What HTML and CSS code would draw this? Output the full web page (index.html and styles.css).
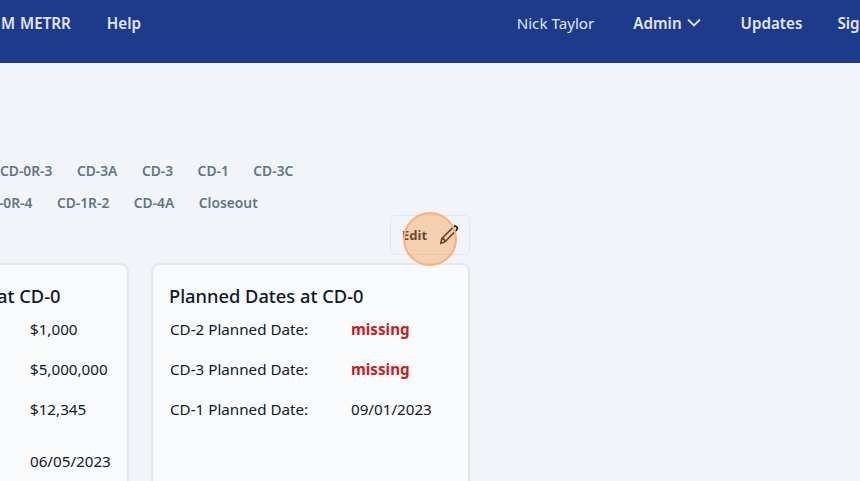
FILE: index.html
```html
<!DOCTYPE html>
<html lang="en">
<head>
    <meta charset="UTF-8">
    <meta name="viewport" content="width=device-width, initial-scale=1.0">
    <title>PM METRR</title>
    <link rel="stylesheet" href="styles.css">
</head>
<body>
    <header class="topbar">
        <nav class="nav-left">
            <a class="nav-link nav-brand" href="#">M METRR</a>
            <a class="nav-link" href="#">Help</a>
        </nav>
        <nav class="nav-right">
            <span class="nav-user">Nick Taylor</span>
            <a class="nav-link nav-admin" href="#">Admin
                <svg class="chevron" viewBox="0 0 14 9" width="14" height="9"><path d="M1 1.5l6 6 6-6" fill="none" stroke="currentColor" stroke-width="1.8"/></svg>
            </a>
            <a class="nav-link nav-updates" href="#">Updates</a>
            <a class="nav-link nav-sign" href="#">Sign Out</a>
        </nav>
    </header>

    <main class="content">
        <div class="tabs">
            <div class="tab-row tab-row-one">
                <a href="#">CD-0R-3</a>
                <a href="#">CD-3A</a>
                <a href="#">CD-3</a>
                <a href="#">CD-1</a>
                <a href="#">CD-3C</a>
            </div>
            <div class="tab-row tab-row-two">
                <a href="#">CD-0R-4</a>
                <a href="#">CD-1R-2</a>
                <a href="#">CD-4A</a>
                <a href="#">Closeout</a>
            </div>
        </div>

        <div class="edit-row">
            <button class="edit-btn" type="button">Edit
                <svg class="pencil" viewBox="0 0 20 20" width="20" height="20"><path d="M1.6 18.4l1.3-5L14.6 1.9c.9-.8 2.2-.8 3 0 .8.8.8 2.1 0 3L6 16.8z M2.9 13.4c1.8.3 3 1.5 3.1 3.4" fill="none" stroke="currentColor" stroke-width="1.6" stroke-linejoin="round"/></svg>
            </button>
            <span class="click-marker"></span>
        </div>

        <div class="cards">
            <section class="card card-wide-label">
                <h2>Planned Financials at CD-0</h2>
                <div class="card-row"><span>TEC Low:</span><span>$1,000</span></div>
                <div class="card-row"><span>TEC High:</span><span>$5,000,000</span></div>
                <div class="card-row"><span>OPC:</span><span>$12,345</span></div>
                <div class="card-row card-row-tall"><span>CD-0 Approval Date:</span><span>06/05/2023</span></div>
            </section>
            <section class="card">
                <h2>Planned Dates at CD-0</h2>
                <div class="card-row"><span>CD-2 Planned Date:</span><span class="missing">missing</span></div>
                <div class="card-row"><span>CD-3 Planned Date:</span><span class="missing">missing</span></div>
                <div class="card-row"><span>CD-1 Planned Date:</span><span>09/01/2023</span></div>
            </section>
        </div>
    </main>
</body>
</html>
```

FILE: styles.css
```css
* {
    box-sizing: border-box;
}
html, body {
    height: 100%;
}
body {
    margin: 0;
    overflow: hidden;
    background-color: #f1f5f9;
    color: #111827;
    font-family: "Noto Sans", "Open Sans", Arial, sans-serif;
    font-size: 15.2px;
}
a {
    color: inherit;
    text-decoration: none;
}

/* barra superior */
.topbar {
    display: flex;
    justify-content: space-between;
    align-items: center;
    height: 63px;
    padding-bottom: 18px;
    background-color: #1e3a8a;
    color: #e0e7ff;
    white-space: nowrap;
}
.nav-left, .nav-right {
    display: flex;
    align-items: center;
}
.nav-left {
    gap: 36px;
    margin-left: 1px;
}
.nav-right {
    gap: 39px;
    margin-right: -41px;
}
.nav-link {
    font-weight: 600;
}
.nav-brand {
    word-spacing: 1px;
}
.nav-updates {
    margin-left: 1px;
}
.nav-sign {
    margin-left: -4px;
}
.nav-user {
    color: #dbeafe;
}
.nav-admin {
    display: flex;
    align-items: center;
    gap: 5px;
}

/* pestañas */
.content {
    padding-top: 91px;
}
.tab-row {
    display: flex;
    gap: 24.5px;
    height: 32px;
    align-items: center;
    color: #64748b;
    font-size: 13.8px;
    font-weight: 600;
    white-space: nowrap;
}
.tab-row-two {
    margin-left: -20px;
}

/* boton de editar */
.edit-row {
    position: relative;
    width: 470px;
    display: flex;
    justify-content: flex-end;
    margin-top: -3px;
}
.edit-btn {
    display: flex;
    align-items: center;
    justify-content: space-between;
    width: 80px;
    height: 40px;
    padding: 0 10px 0 11px;
    background: transparent;
    border: 1px solid #e2e8f0;
    border-radius: 5px;
    color: #111827;
    font-family: inherit;
    font-size: 13px;
    font-weight: 700;
}
.click-marker {
    position: absolute;
    left: 403px;
    top: -3px;
    width: 54px;
    height: 54px;
    border: 2.5px solid #f9b07a;
    border-radius: 50%;
    background-color: rgba(251, 146, 60, 0.38);
}

/* tarjetas */
.cards {
    display: flex;
    gap: 22px;
    margin-top: 8px;
    margin-left: -190px;
}
.card {
    flex: none;
    width: 319px;
    height: 260px;
    padding: 19px 16px;
    background-color: #f8fafc;
    border: 2px solid #e2e8f0;
    border-radius: 8px;
}
.card h2 {
    margin: 0 0 9px;
    height: 24px;
    color: #0f172a;
    font-size: 18.3px;
    font-weight: 500;
    line-height: 24px;
    white-space: nowrap;
}
.card-wide-label h2 {
    margin-left: 2px;
}
.card-row {
    display: grid;
    grid-template-columns: 181px 1fr;
    height: 40px;
    padding-left: 1px;
    line-height: 24px;
}
.card-wide-label .card-row {
    grid-template-columns: 201px 1fr;
}
.card-row-tall {
    height: 92px;
    padding-top: 12px;
}
.missing {
    color: #c81e1e;
    font-weight: 700;
}
```
